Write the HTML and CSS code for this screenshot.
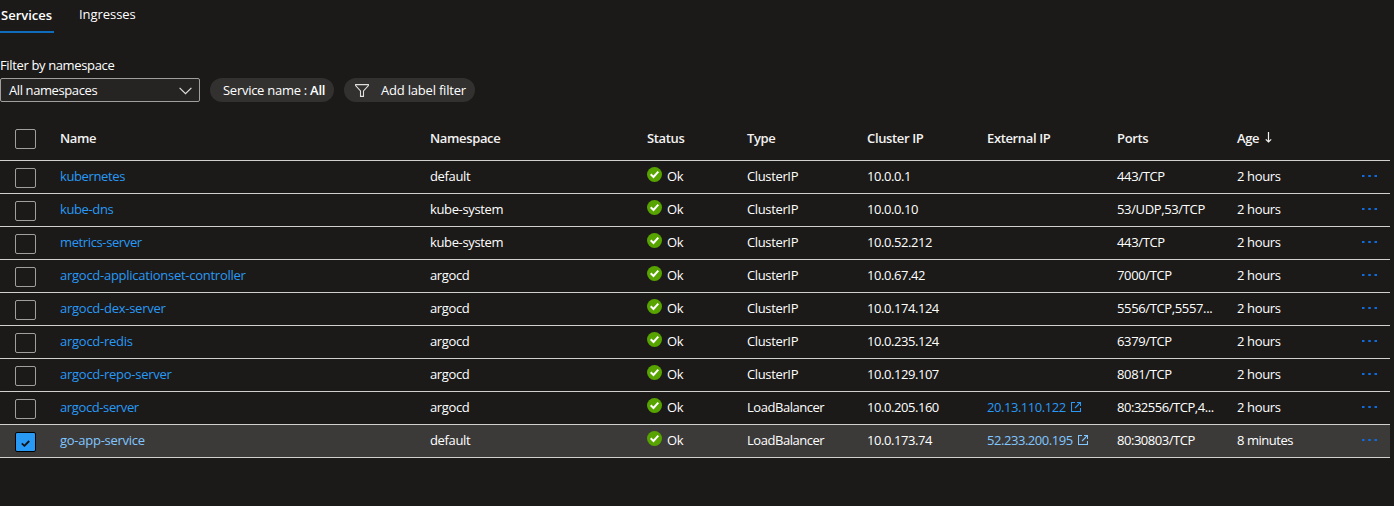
FILE: index.html
```html
<!DOCTYPE html>
<html lang="en">
<head>
<meta charset="utf-8">
<title>Services and ingresses</title>
<link rel="stylesheet" href="styles.css">
</head>
<body>
<svg class="defs" aria-hidden="true">
  <symbol id="ok" viewBox="0 0 15 15"><circle cx="7.5" cy="7.5" r="7.5" fill="#57a300"/><path d="M3.7 7.3 6.5 10 11.3 4.700" fill="none" stroke="#fff" stroke-width="2"/></symbol>
  <symbol id="open" viewBox="0 0 10 10"><path d="M4 .5H.5v9h9V6M6 .5h3.500V4M9.500.5 4 6" fill="none" stroke="currentColor" stroke-width="1.100"/></symbol>
  <symbol id="dots" viewBox="0 0 16 2"><path d="M0 0h2.500v2H0zM6.300 0h2.500v2H6.300zM12.500 0H15v2h-2.500z" fill="currentColor"/></symbol>
</svg>
<nav class="tabs"><a class="tab active"><span>Services</span></a><a class="tab"><span>Ingresses</span></a></nav>
<label class="filter-label"><span>Filter by namespace</span></label>
<div class="filters">
  <div class="select"><span>All namespaces</span><svg class="chevron" viewBox="0 0 13 8"><path d="M.6.8 6.500 6.700 12.400.8" fill="none" stroke="#e0dfde" stroke-width="1.200"/></svg></div>
  <div class="pill pill-name"><span>Service name : <b>All</b></span></div>
  <div class="pill pill-label"><svg class="funnel" viewBox="0 0 14 13"><path d="M.6.6h12.800v1L8.500 7v5.400h-3V7L.6 1.600z" fill="none" stroke="#e0dfde" stroke-width="1.100"/></svg><span>Add label filter</span></div>
</div>
<main class="table">
  <div class="row head"><i class="check"></i><span>Name</span><span>Namespace</span><span>Status</span><span>Type</span><span>Cluster IP</span><span>External IP</span><span>Ports</span><span class="age">Age<svg class="sort" viewBox="0 0 7 11"><path d="M3.500 0v10M.8 7.300 3.500 10l2.700-2.700" fill="none" stroke="#f3f2f1" stroke-width="1.200"/></svg></span></div>
  <div class="row"><i class="check"></i><a>kubernetes</a><span>default</span><span class="status"><svg><use href="#ok"/></svg>Ok</span><span>ClusterIP</span><span class="num">10.0.0.1</span><span></span><span>443/TCP</span><span>2 hours</span><svg class="dots"><use href="#dots"/></svg></div>
  <div class="row"><i class="check"></i><a>kube-dns</a><span>kube-system</span><span class="status"><svg><use href="#ok"/></svg>Ok</span><span>ClusterIP</span><span class="num">10.0.0.10</span><span></span><span>53/UDP,53/TCP</span><span>2 hours</span><svg class="dots"><use href="#dots"/></svg></div>
  <div class="row"><i class="check"></i><a>metrics-server</a><span>kube-system</span><span class="status"><svg><use href="#ok"/></svg>Ok</span><span>ClusterIP</span><span class="num">10.0.52.212</span><span></span><span>443/TCP</span><span>2 hours</span><svg class="dots"><use href="#dots"/></svg></div>
  <div class="row"><i class="check"></i><a class="long">argocd-applicationset-controller</a><span>argocd</span><span class="status"><svg><use href="#ok"/></svg>Ok</span><span>ClusterIP</span><span class="num">10.0.67.42</span><span></span><span>7000/TCP</span><span>2 hours</span><svg class="dots"><use href="#dots"/></svg></div>
  <div class="row"><i class="check"></i><a class="long">argocd-dex-server</a><span>argocd</span><span class="status"><svg><use href="#ok"/></svg>Ok</span><span>ClusterIP</span><span class="num">10.0.174.124</span><span></span><span>5556/TCP,5557...</span><span>2 hours</span><svg class="dots"><use href="#dots"/></svg></div>
  <div class="row"><i class="check"></i><a class="long">argocd-redis</a><span>argocd</span><span class="status"><svg><use href="#ok"/></svg>Ok</span><span>ClusterIP</span><span class="num">10.0.235.124</span><span></span><span>6379/TCP</span><span>2 hours</span><svg class="dots"><use href="#dots"/></svg></div>
  <div class="row"><i class="check"></i><a class="long">argocd-repo-server</a><span>argocd</span><span class="status"><svg><use href="#ok"/></svg>Ok</span><span>ClusterIP</span><span class="num">10.0.129.107</span><span></span><span>8081/TCP</span><span>2 hours</span><svg class="dots"><use href="#dots"/></svg></div>
  <div class="row"><i class="check"></i><a>argocd-server</a><span>argocd</span><span class="status"><svg><use href="#ok"/></svg>Ok</span><span class="lb">LoadBalancer</span><span class="num">10.0.205.160</span><a class="ext">20.13.110.122<svg><use href="#open"/></svg></a><span class="lb">80:32556/TCP,4...</span><span>2 hours</span><svg class="dots"><use href="#dots"/></svg></div>
  <div class="row selected"><i class="check"><svg viewBox="0 0 9 7"><path d="M.8 3.400 3.400 5.800 8.200 1" fill="none" stroke="#111" stroke-width="1.800"/></svg></i><a class="long">go-app-service</a><span>default</span><span class="status"><svg><use href="#ok"/></svg>Ok</span><span class="lb">LoadBalancer</span><span class="num">10.0.173.74</span><a class="ext">52.233.200.195<svg><use href="#open"/></svg></a><span class="lb">80:30803/TCP</span><span class="lb">8 minutes</span><svg class="dots"><use href="#dots"/></svg></div>
</main>
</body>
</html>
```
FILE: styles.css
```css
* { box-sizing: border-box; }
body {
  margin: 0;
  height: 506px;
  overflow: hidden;
  background: #1b1a19;
  color: #fff;
  font: 13px/18px "Open Sans", "Noto Sans", sans-serif;
  letter-spacing: -0.36px;
}
.defs { display: none; }
svg { display: block; flex: none; }
.tabs { display: flex; gap: 25px; height: 33px; }
.tab { height: 33px; padding-top: 5px; letter-spacing: -0.05px; }
.tab.active {
  width: 54px;
  padding: 6px 0 0 1px;
  border-bottom: 2px solid #0f6cbd;
  font-weight: 600;
  letter-spacing: 0;
}
.filter-label { display: block; height: 45px; padding-top: 23px; }
.filters { display: flex; height: 24px; }
.select {
  display: flex;
  align-items: center;
  justify-content: space-between;
  width: 200px;
  padding: 0 7px 0 8px;
  border: 1px solid #a19f9d;
  border-radius: 2px;
  background: #252423;
  letter-spacing: -0.4px;
}
.chevron { width: 13px; height: 8px; margin-top: 1px; }
.pill {
  display: flex;
  align-items: center;
  border-radius: 12px;
  background: #323130;
  white-space: nowrap;
}
.pill b { font-weight: 600; }
.pill-name { width: 124px; margin-left: 10px; padding-left: 13px; letter-spacing: -0.27px; }
.pill-label { width: 131px; margin-left: 10px; padding-left: 11px; letter-spacing: -0.2px; }
.funnel { width: 14px; height: 13px; margin-right: 12px; }
.table { width: 1390px; margin-top: 15px; }
.row {
  display: grid;
  grid-template-columns: 45px 370px 217px 100px 120px 120px 130px 120px 125px 16px;
  align-items: center;
  height: 33px;
  padding: 0 0 2px 15px;
  border-bottom: 1px solid #d2d0ce;
  white-space: nowrap;
}
.head {
  height: 44px;
  padding-bottom: 2px;
  font-weight: 600;
  color: #f3f2f1;
  letter-spacing: -0.42px;
}
.head span { letter-spacing: -0.36px; }
.check {
  display: flex;
  align-items: center;
  justify-content: center;
  width: 21px;
  height: 20px;
  margin-top: 4px;
  border: 1px solid #a19f9d;
  border-radius: 2px;
}
.head .check { margin-top: 2px; }
.row a { color: #2899f5; letter-spacing: -0.38px; }
.row a.long { letter-spacing: -0.26px; }
.lb { letter-spacing: -0.46px; }
.status { display: flex; gap: 5px; }
.status svg { width: 15px; height: 15px; }
.num { letter-spacing: -0.44px; }
.age { display: flex; align-items: center; gap: 6px; }
.sort { width: 7px; height: 11px; }
.row a.ext { display: flex; align-items: center; gap: 5px; letter-spacing: -0.45px; }
.ext svg { width: 10px; height: 10px; }
.dots { width: 16px; height: 2px; color: #0f6cde; }
.selected { background: #3b3a39; }
.row.selected a { color: #82c7ff; }
.selected .check { border-color: #000; background: #2899f5; }
.selected .check svg { width: 9px; height: 7px; margin-top: 3px; }
```
